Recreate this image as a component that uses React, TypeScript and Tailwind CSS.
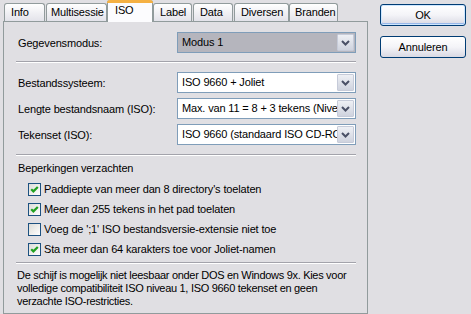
import React from "react";

const tabs: { label: string; w: string; ml: string; pl: string; selected?: boolean }[] = [
  { label: "Info", w: "w-[41px]", ml: "ml-0", pl: "pl-[6px]" },
  { label: "Multisessie", w: "w-[61px]", ml: "ml-[1px]", pl: "pl-[4px]" },
  { label: "ISO", w: "w-[46px]", ml: "ml-0", pl: "pl-[7px]", selected: true },
  { label: "Label", w: "w-[39px]", ml: "ml-0", pl: "pl-[6px]" },
  { label: "Data", w: "w-[40px]", ml: "ml-[1px]", pl: "pl-[6px]" },
  { label: "Diversen", w: "w-[55px]", ml: "ml-[1px]", pl: "pl-[6px]" },
  { label: "Branden", w: "w-[49px]", ml: "ml-0", pl: "pl-[5px]" },
];

function Chevron() {
  return (
    <svg width="9" height="6" viewBox="0 0 9 6" className="block">
      <polyline points="1,1 4.5,4.5 8,1" fill="none" stroke="#4a5066" strokeWidth="2" />
    </svg>
  );
}

function Combo({ text, gray }: { text: string; gray?: boolean }) {
  return (
    <div
      className={`w-[179px] h-[21px] border border-[#7f9db9] flex items-stretch ${
        gray ? "bg-[#b5b5bd]" : "bg-white"
      }`}
    >
      <div className="flex-1 overflow-hidden whitespace-nowrap pl-[4px] leading-[19px]">{text}</div>
      <div className="w-[17px] m-[1px] ml-0 border border-[#c6cbd9] rounded-[1px] bg-gradient-to-b from-[#eef0f5] to-[#cfd3de] flex items-center justify-center">
        <Chevron />
      </div>
    </div>
  );
}

function Separator() {
  return <div className="h-[2px] border-t border-[#a3a3ab] border-b border-b-white -ml-[2px]" />;
}

function Checkbox({ checked, label }: { checked: boolean; label: string }) {
  return (
    <div className="h-[20px] flex items-center pl-[10px] gap-[3px] whitespace-nowrap">
      <div className="w-[13px] h-[13px] border border-[#1c5180] bg-gradient-to-br from-[#dcdcd7] to-white flex items-center justify-center shrink-0">
        {checked && (
          <svg width="11" height="11" viewBox="0 0 11 11" className="block">
            <path d="M2.2 5.2 L4.4 7.4 L8.8 3" fill="none" stroke="#21a121" strokeWidth="2.2" />
          </svg>
        )}
      </div>
      <span>{label}</span>
    </div>
  );
}

function Button({ label, def }: { label: string; def?: boolean }) {
  return (
    <div
      className={`w-[86px] h-[22px] rounded-[3px] border border-[#003c74] bg-gradient-to-b from-white via-[#f4f4f8] to-[#d9d9e3] flex items-center justify-center ${
        def ? "shadow-[inset_0_0_0_1px_#cee7ff,inset_0_-1px_0_1px_#98b8ea]" : ""
      }`}
    >
      {label}
    </div>
  );
}

export default function App() {
  return (
    <div className="w-[471px] h-[314px] overflow-hidden bg-[#e0dfe3] flex text-[11px] text-black font-['Liberation_Sans',Arial,sans-serif] tracking-[-0.15px]">
      <div className="w-[368px] shrink-0 flex flex-col pl-[3px]">
        <div className="h-[22px] flex items-end pl-[1px] relative z-10">
          {tabs.map((t) =>
            t.selected ? (
              <div
                key={t.label}
                className={`${t.w} ${t.ml} h-[22px] -mb-[1px] border-x border-[#919b9c] bg-[#fcfcfe] rounded-t-[3px] flex flex-col`}
              >
                <div className="h-[3px] bg-[#f5b143] rounded-t-[3px] -mx-[1px]" />
                <div className={`${t.pl} leading-[15px]`}>{t.label}</div>
              </div>
            ) : (
              <div
                key={t.label}
                className={`${t.w} ${t.ml} ${t.pl} h-[18px] border-t border-x border-[#919b9c] rounded-t-[3px] bg-gradient-to-b from-white to-[#e3e3ea] leading-[17px] whitespace-nowrap`}
              >
                {t.label}
              </div>
            )
          )}
        </div>
        <div className="w-[365px] h-[300px] border border-[#919b9c] bg-[#e0dfe3] pl-[14px] pr-[11px] pt-[10px] flex flex-col">
          <div className="flex items-center justify-between h-[21px]">
            <span>Gegevensmodus:</span>
            <Combo text="Modus 1" gray />
          </div>
          <div className="mt-[8px]">
            <Separator />
          </div>
          <div className="mt-[9px] flex flex-col gap-[5px]">
            <div className="flex items-center justify-between h-[21px]">
              <span>Bestandssysteem:</span>
              <Combo text="ISO 9660 + Joliet" />
            </div>
            <div className="flex items-center justify-between h-[21px]">
              <span>Lengte bestandsnaam (ISO):</span>
              <Combo text="Max. van 11 = 8 + 3 tekens (Niveau 1)" />
            </div>
            <div className="flex items-center justify-between h-[21px]">
              <span>Tekenset (ISO):</span>
              <Combo text="ISO 9660 (standaard ISO CD-ROM)" />
            </div>
          </div>
          <div className="mt-[9px]">
            <Separator />
          </div>
          <div className="mt-[6px] leading-[13px]">Beperkingen verzachten</div>
          <div className="mt-[4px] flex flex-col">
            <Checkbox checked label="Paddiepte van meer dan 8 directory's toelaten" />
            <Checkbox checked label="Meer dan 255 tekens in het pad toelaten" />
            <Checkbox checked={false} label="Voeg de ';1' ISO bestandsversie-extensie niet toe" />
            <Checkbox checked label="Sta meer dan 64 karakters toe voor Joliet-namen" />
          </div>
          <div className="mt-[3px]">
            <Separator />
          </div>
          <div className="mt-[5px] leading-[13px] -ml-[1px] whitespace-nowrap tracking-[-0.3px]">
            De schijf is mogelijk niet leesbaar onder DOS en Windows 9x. Kies voor
            <br />
            volledige compatibiliteit ISO niveau 1, ISO 9660 tekenset en geen
            <br />
            verzachte ISO-restricties.
          </div>
        </div>
      </div>
      <div className="pl-[12px] pt-[4px] flex flex-col gap-[10px]">
        <Button label="OK" def />
        <Button label="Annuleren" />
      </div>
    </div>
  );
}
